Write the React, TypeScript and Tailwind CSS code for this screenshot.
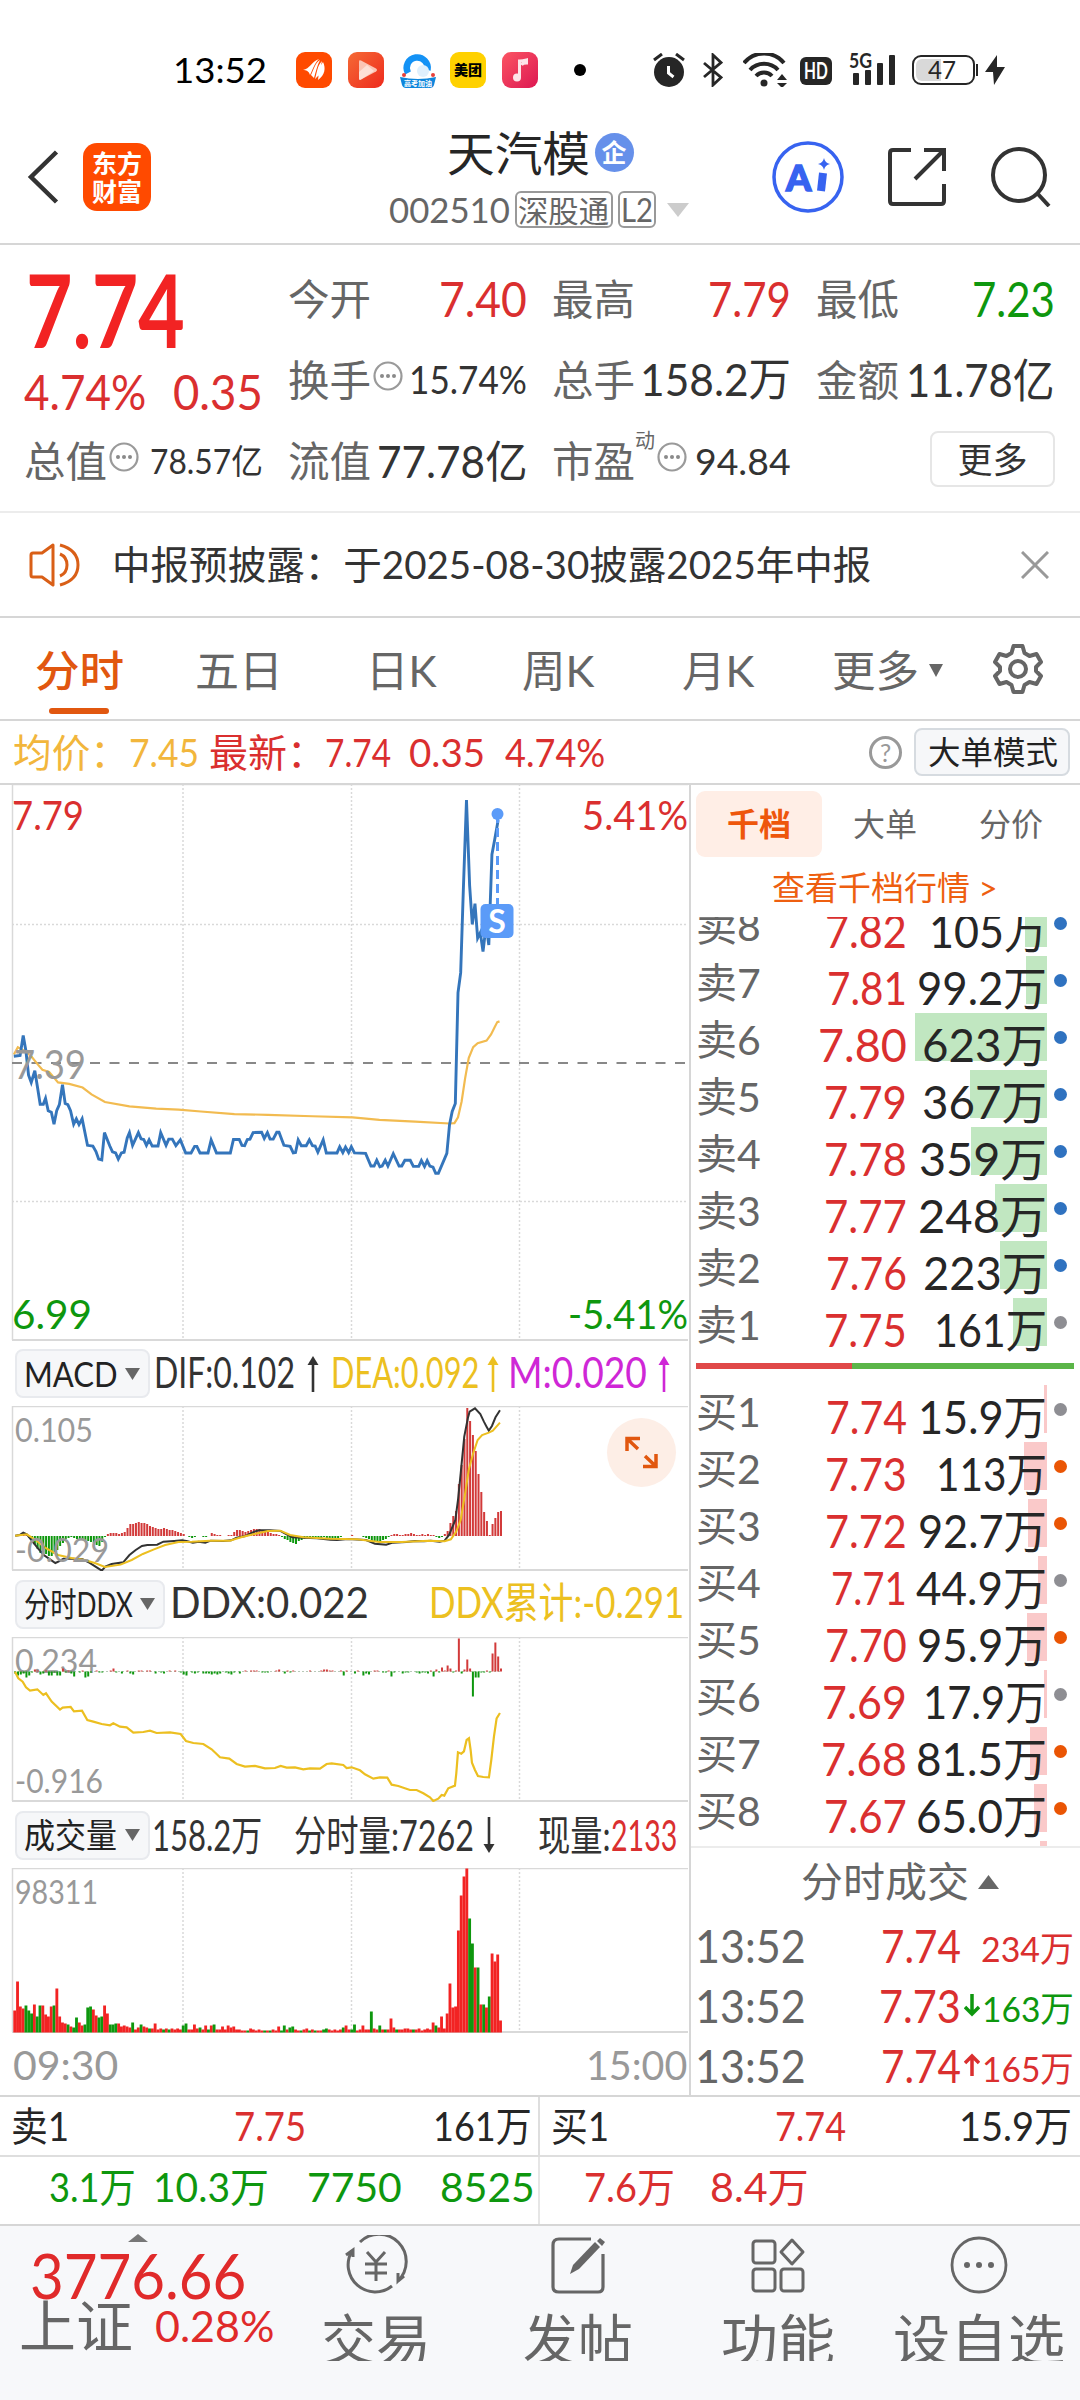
import { useLayoutEffect, useRef, useState } from 'react';
import type { ReactNode } from 'react';
import clsx from 'clsx';

type FitProps = {
    w: number;
    className?: string;
    children: ReactNode;
};

// Text squeezed or stretched horizontally so it fills exactly w pixels
function Fit({ w, className, children }: FitProps) {
    const ref = useRef<HTMLSpanElement>(null);
    const [scale, setScale] = useState(1);

    useLayoutEffect(() => {
        if (ref.current) setScale(w / ref.current.offsetWidth);
    }, [w, children]);

    return (
        <span className={ clsx('inline-block shrink-0 whitespace-nowrap leading-none', className) } style={ { width: w } }>
            <span ref={ ref } className="inline-block origin-left" style={ { transform: `scaleX(${scale})` } }>
                { children }
            </span>
        </span>
    );
}

const Dots = () => (
    <svg viewBox="0 0 30 30" className="size-[30px] shrink-0" fill="none">
        <circle cx="15" cy="15" r="13.5" stroke="#9a9a9a" strokeWidth="2.2" />
        <circle cx="9" cy="15" r="2" fill="#8a8a8a" />
        <circle cx="15" cy="15" r="2" fill="#8a8a8a" />
        <circle cx="21" cy="15" r="2" fill="#8a8a8a" />
    </svg>
);

/* ---------- Status bar ---------- */

function StatusBar() {
    return (
        <div className="flex h-[110px] items-center pt-[29px] pl-[173px] text-black">
            <Fit w={ 94 } className="text-[35px]">13:52</Fit>
            <svg viewBox="0 0 36 36" className="ml-[29px] size-9">
                <rect width="36" height="36" rx="9" fill="#ff4a00" />
                <path d="M7 18c7-1 8-8 16-11-5 5-5 8-9 16-1-4-4-5-7-5zM15 23c3-6 4-12 9-15-3 6-4 11-6 18zM19 27c2-6 2-13 7-18-1 4-2 8-1 12zM22 28c1-6 1-13 5-18 3 6 2 13-5 18z" fill="#fff" />
            </svg>
            <svg viewBox="0 0 36 36" className="ml-4 size-9">
                <defs>
                    <linearGradient id="play" x1="0" y1="0" x2="1" y2="1">
                        <stop offset="0" stopColor="#f56a35" />
                        <stop offset="1" stopColor="#ee2a1d" />
                    </linearGradient>
                </defs>
                <rect width="36" height="36" rx="9" fill="url(#play)" />
                <path d="M11 9.500q0-2 2-1l15 8q2 1.500 0 3l-15 8q-2 1-2-1z" fill="#fbc4b4" />
                <path d="M11 20l8-7 7 6-13 8.500q-2 1-2-1z" fill="#fde0d6" />
            </svg>
            <svg viewBox="0 0 38 36" className="ml-[15px] h-9 w-[38px]">
                <path d="M9 21A10.500 10.500 0 1 1 28.500 18" fill="none" stroke="#1492f5" strokeWidth="6.500" />
                <circle cx="24" cy="19" r="6" fill="#dff0fd" />
                <path d="M1 25q18 4 36 0l-2 8q-1 3-4 3H7q-3 0-4-3z" fill="#0e86dc" />
                <circle cx="5" cy="23" r="2" fill="#e8403a" />
                <circle cx="34" cy="23" r="2" fill="#e8403a" />
                <text x="19" y="33.500" textAnchor="middle" fontSize="7" fontWeight="700" fill="#fff">高考加油</text>
            </svg>
            <div className="ml-[13px] flex size-9 items-center justify-center rounded-[9px] bg-[#ffd100] text-[14px] font-black">美团</div>
            <svg viewBox="0 0 36 36" className="ml-4 size-9">
                <defs>
                    <linearGradient id="music" x1="0" y1="0" x2="1" y2="1">
                        <stop offset="0" stopColor="#fb5563" />
                        <stop offset="1" stopColor="#dd1752" />
                    </linearGradient>
                </defs>
                <rect width="36" height="36" rx="9" fill="url(#music)" />
                <circle cx="15" cy="25.500" r="4" fill="#fde4e8" />
                <path d="M17.500 25.500V9q3 0 7-1v3q-4 0-5 2" fill="none" stroke="#fde4e8" strokeWidth="3" />
            </svg>
            <div className="ml-[36px] size-3 rounded-full bg-black" />
            <div className="ml-[67px] flex items-center text-[#262626]">
                <svg viewBox="0 0 32 34" className="h-[34px] w-8" fill="none">
                    <circle cx="16" cy="19" r="15" fill="#262626" />
                    <path d="M1 7l8-6M31 7l-8-6" stroke="#262626" strokeWidth="3" />
                    <path d="M15.500 13v7l5 4" stroke="#fff" strokeWidth="3" />
                </svg>
                <svg viewBox="0 0 20 34" className="ml-[18px] h-[34px] w-5" fill="none" stroke="#262626" strokeWidth="2.8">
                    <path d="M1 10l17 14.500-8 7.500V2l8 7.500L1 24" />
                </svg>
                <svg viewBox="0 0 44 34" className="ml-[20px] h-[34px] w-11" fill="none" stroke="#262626" strokeWidth="4">
                    <path d="M1 10a26 26 0 0 1 40 0M7 17a19 19 0 0 1 28 0M13 23a11 11 0 0 1 16 0" />
                    <circle cx="21" cy="30" r="3.500" fill="#262626" stroke="none" />
                    <path d="M34 27l5-6 5 6zM34 30l5 5 5-5z" fill="#262626" stroke="none" />
                </svg>
                <div className="mt-[2px] ml-[13px] flex h-7 w-8 items-center justify-center rounded-md bg-[#262626] text-white">
                    <Fit w={ 24 } className="text-[22px] font-bold">HD</Fit>
                </div>
                <svg viewBox="0 0 47 34" className="ml-[17px] h-[34px] w-[47px]" fill="#262626">
                    <text x="0" y="15" fontSize="20" fontWeight="700" textLength="23" lengthAdjust="spacingAndGlyphs">5G</text>
                    <rect x="4" y="20" width="6" height="12" rx="1" />
                    <rect x="16" y="17" width="6" height="15" rx="1" />
                    <rect x="28" y="10" width="6" height="22" rx="1" />
                    <rect x="40" y="2" width="6" height="30" rx="1" />
                </svg>
                <div className="ml-[16px] flex h-[30px] w-[63px] items-center rounded-[9px] border-2 border-[#262626] p-[2px]">
                    <div className="flex h-full w-[25px] items-center rounded-l-[6px] bg-[#d9d9d9] pl-3">
                        <Fit w={ 28 } className="text-[25px]">47</Fit>
                    </div>
                </div>
                <div className="ml-[1px] h-3 w-[2px] bg-[#262626]" />
                <svg viewBox="0 0 20 32" className="ml-[7px] h-8 w-5" fill="#262626">
                    <path d="M12 1L0 18h8L9 31 20 13h-8z" />
                </svg>
            </div>
        </div>
    );
}

/* ---------- Title bar ---------- */

function Header() {
    return (
        <header className="flex h-[135px] items-center border-b-2 border-[#d6d6d6] pl-[27px]">
            <svg viewBox="0 0 32 56" className="h-14 w-8" fill="none" stroke="#333" strokeWidth="4.500">
                <path d="M29.500 3L4 28l25.500 25" />
            </svg>
            <div className="ml-6 flex h-[68px] w-[68px] flex-col items-center justify-center rounded-[14px] bg-[#ff4a00] text-[25px] leading-[28px] font-bold text-white">
                <span>东方</span>
                <span>财富</span>
            </div>
            <div className="ml-[236px] flex w-[303px] flex-col items-center pt-[5px]">
                <div className="flex items-center gap-[5px] pl-[3px] text-[#262626]">
                    <Fit w={ 143 } className="text-[47px]">天汽模</Fit>
                    <span className="-mt-[2px] flex size-[39px] items-center justify-center rounded-full bg-[#6690ea] text-[25px] font-bold text-white">企</span>
                </div>
                <div className="mt-[14px] flex h-[38px] items-center text-[#666]">
                    <Fit w={ 121 } className="text-[35px]">002510</Fit>
                    <span className="ml-[5px] flex h-[37px] w-[98px] items-center justify-center rounded-[6px] border-2 border-[#999]">
                        <Fit w={ 91 } className="text-[30px]">深股通</Fit>
                    </span>
                    <span className="ml-[5px] flex h-[37px] w-[38px] items-center justify-center rounded-[6px] border-2 border-[#999]">
                        <Fit w={ 32 } className="text-[32px]">L2</Fit>
                    </span>
                    <svg viewBox="0 0 22 14" className="ml-[11px] h-[14px] w-[22px]" fill="#ccc">
                        <path d="M0 0h22L11 14z" />
                    </svg>
                </div>
            </div>
            <svg viewBox="0 0 72 72" className="ml-[82px] size-[72px]" fill="none">
                <circle cx="36" cy="36" r="34" stroke="#3763f0" strokeWidth="3.500" />
                <text x="14" y="50" fontSize="36" fontWeight="900" fill="#3763f0" stroke="#3763f0" strokeWidth="1.500">A</text>
                <path d="M51 32l-2 18" stroke="#3763f0" strokeWidth="8" />
                <path d="M52 17q1 5 6 6-5 1-6 6-1-5-6-6 5-1 6-6z" fill="#3763f0" />
            </svg>
            <svg viewBox="0 0 58 58" className="ml-11 size-[58px]" fill="none" stroke="#333" strokeWidth="4">
                <path d="M23 2H5Q2 2 2 5v48q0 3 3 3h48q3 0 3-3V36M36 2h20v21M56 2L27 31" />
            </svg>
            <svg viewBox="0 0 60 60" className="ml-[45px] size-[60px]" fill="none" stroke="#333" strokeWidth="4">
                <circle cx="28" cy="28" r="26" />
                <path d="M46 46l12 13" />
            </svg>
        </header>
    );
}

/* ---------- Quote summary ---------- */

function Summary() {
    return (
        <section className="grid h-[268px] grid-cols-[239px_239px_239px_239px] grid-rows-[81px_81px_81px] gap-x-[25px] border-b-2 border-[#ececec] pt-[13px] pl-6 text-[42px] text-[#666]">
            <div className="row-span-2 flex flex-col pt-[1px] text-[#da2f2f]">
                <Fit w={ 159 } className="ml-[2px] text-[101px] font-bold text-[#f22323]">7.74</Fit>
                <div className="mt-[8px] flex justify-between">
                    <Fit w={ 122 } className="text-[48px]">4.74%</Fit>
                    <Fit w={ 90 } className="text-[48px]">0.35</Fit>
                </div>
            </div>
            <div className="flex items-center justify-between">
                <Fit w={ 83 }>今开</Fit>
                <Fit w={ 88 } className="text-[48px] text-[#da2f2f]">7.40</Fit>
            </div>
            <div className="flex items-center justify-between">
                <Fit w={ 83 }>最高</Fit>
                <Fit w={ 83 } className="text-[48px] text-[#da2f2f]">7.79</Fit>
            </div>
            <div className="flex items-center justify-between">
                <Fit w={ 83 }>最低</Fit>
                <Fit w={ 83 } className="text-[48px] text-[#0e970e]">7.23</Fit>
            </div>
            <div className="flex items-center">
                <Fit w={ 83 }>换手</Fit>
                <span className="ml-[2px] -mt-2"><Dots /></span>
                <Fit w={ 118 } className="ml-auto text-[39px] text-[#333]">15.74%</Fit>
            </div>
            <div className="flex items-center justify-between">
                <Fit w={ 83 }>总手</Fit>
                <Fit w={ 151 } className="text-[45px] text-[#333]">158.2万</Fit>
            </div>
            <div className="flex items-center justify-between">
                <Fit w={ 83 }>金额</Fit>
                <Fit w={ 149 } className="text-[46px] text-[#333]">11.78亿</Fit>
            </div>
            <div className="flex items-center">
                <Fit w={ 83 }>总值</Fit>
                <span className="ml-[2px] -mt-2"><Dots /></span>
                <Fit w={ 113 } className="ml-auto text-[34px] text-[#333]">78.57亿</Fit>
            </div>
            <div className="flex items-center justify-between">
                <Fit w={ 83 }>流值</Fit>
                <Fit w={ 150 } className="text-[44px] text-[#333]">77.78亿</Fit>
            </div>
            <div className="flex items-center">
                <Fit w={ 83 }>市盈</Fit>
                <Fit w={ 20 } className="-mt-[42px] text-[20px]">动</Fit>
                <span className="ml-[2px] -mt-2"><Dots /></span>
                <Fit w={ 96 } className="ml-auto text-[37px] text-[#333]">94.84</Fit>
            </div>
            <div className="flex items-center justify-end">
                <button className="mt-[-3px] flex h-14 w-[125px] items-center justify-center rounded-[8px] border-2 border-[#e6e6e6] text-[#333]">
                    <Fit w={ 70 } className="text-[35px]">更多</Fit>
                </button>
            </div>
        </section>
    );
}

function Notice() {
    return (
        <section className="flex h-[105px] items-center border-b-2 border-[#d6d6d6] pl-[29px] text-[#333]">
            <svg viewBox="0 0 52 46" className="h-[46px] w-[52px]" fill="none" stroke="#d95f17" strokeWidth="3">
                <path d="M24 3L13 11H4Q2 11 2 13v20q0 2 2 2h9l11 8z" strokeLinejoin="round" />
                <path d="M31 12q7 3 7 11t-7 11M31 3q18 5 18 20T31 43" />
            </svg>
            <Fit w={ 759 } className="ml-[31px] text-[39px]">中报预披露：于2025-08-30披露2025年中报</Fit>
            <svg viewBox="0 0 28 28" className="ml-[150px] size-7" stroke="#999" strokeWidth="3">
                <path d="M1 1l26 26M27 1L1 27" />
            </svg>
        </section>
    );
}

/* ---------- Period tabs ---------- */

function Tabs() {
    return (
        <nav className="flex h-[103px] border-b-2 border-[#d6d6d6] pt-[31px] pl-[34px] text-[43px] text-[#666]">
            <div className="flex w-[90px] flex-col items-center text-[#e1570f]">
                <Fit w={ 89 } className="font-medium">分时</Fit>
                <span className="mt-[16px] h-[6px] w-[60px] rounded-full bg-[#e1570f]" />
            </div>
            <Fit w={ 88 } className="ml-[71px]">五日</Fit>
            <Fit w={ 71 } className="ml-[83px]">日K</Fit>
            <Fit w={ 73 } className="ml-[85px]">周K</Fit>
            <Fit w={ 73 } className="ml-[87px]">月K</Fit>
            <Fit w={ 87 } className="ml-[77px]">更多</Fit>
            <svg viewBox="0 0 14 13" className="mt-[15px] ml-[10px] h-[13px] w-[14px]" fill="#666">
                <path d="M0 0h14L7 13z" />
            </svg>
            <svg viewBox="0 0 52 52" className="mt-[-6px] ml-[49px] size-[52px]" fill="none" stroke="#666" strokeWidth="4" strokeLinejoin="round">
                <path d="M21.500 3h9l2 7 5 3 7-2 4.500 8-5 5v4l5 5-4.500 8-7-2-5 3-2 7h-9l-2-7-5-3-7 2L3 33l5-5v-4l-5-5 4.500-8 7 2 5-3z" />
                <circle cx="26" cy="26" r="8" />
            </svg>
        </nav>
    );
}

function PriceRow() {
    return (
        <div className="flex h-[64px] items-center border-b-2 border-[#d6d6d6] pl-[13px] text-[39px] text-[#da2f2f]">
            <Fit w={ 116 } className="text-[#f2b63c]">均价：</Fit>
            <Fit w={ 70 } className="text-[#f2b63c]">7.45</Fit>
            <Fit w={ 117 } className="ml-[10px]">最新：</Fit>
            <Fit w={ 66 } className="-ml-[1px]">7.74</Fit>
            <Fit w={ 76 } className="ml-[18px]">0.35</Fit>
            <Fit w={ 100 } className="ml-[20px]">4.74%</Fit>
            <span className="ml-[264px] flex size-[33px] items-center justify-center rounded-full border-[3px] border-[#999] text-[25px] leading-none text-[#999]">?</span>
            <button className="ml-3 flex h-[48px] w-[156px] items-center justify-center rounded-[8px] border-2 border-[#d6dbe0] bg-[#f6f7f9] text-[#222]">
                <Fit w={ 130 } className="text-[32px]">大单模式</Fit>
            </button>
        </div>
    );
}

/* ---------- Charts ---------- */

const pricePoints =
    '31,760 45,758 52,703 58,745 64,812 70,832 78,800 84,845 90,892 97,892 102,876 108,910 115,914 121,947 127,910 133,893 140,838 146,890 152,893 158,910 165,947 171,932 177,948 184,932 196,1005 208,1007 215,1022 221,1043 228,1045 234,970 246,1007 252,1023 259,1026 265,1043 272,1026 278,1024 285,985 290,970 297,1005 310,970 316,987 322,989 328,1005 334,990 341,1007 354,1007 360,970 372,1005 378,988 386,988 394,1006 404,990 416,1026 428,1026 436,1008 441,1008 448,1026 466,1026 473,990 485,1026 516,1026 523,989 536,989 542,1005 548,1006 554,989 560,988 567,970 586,969 592,986 599,970 605,988 612,988 620,969 625,969 636,1005 650,1008 657,1026 662,1025 668,990 675,1006 686,1006 693,990 700,1006 706,1007 712,1024 724,990 731,1026 755,1026 761,1009 768,1025 774,1010 781,1025 787,1009 794,1026 819,1027 831,1062 838,1062 844,1046 851,1064 856,1062 863,1046 869,1062 881,1028 894,1062 900,1062 907,1046 919,1046 926,1063 938,1063 944,1047 951,1063 957,1047 963,1062 970,1065 976,1082 982,1082 1001,1027 1007,948 1013,912 1020,890 1026,585 1032,530 1038,300 1045,55 1052,290 1058,397 1064,340 1070,435 1076,420 1082,472 1089,400 1095,454 1102,205 1108,165 1116,110';
const averagePoints =
    '31,755 40,735 55,745 70,760 85,783 95,797 110,803 130,832 155,836 185,846 205,865 235,886 290,898 350,904 400,907 450,912 525,919 600,921 700,925 790,928 850,935 930,940 1007,945 1018,944 1026,928 1034,885 1042,820 1050,765 1060,735 1070,724 1090,717 1100,700 1108,680 1114,666 1119,664';
const difPoints =
    '34,587 44,585 52,578 60,583 70,600 85,625 98,645 112,658 124,669 132,664 142,656 160,656 185,658 200,668 214,680 228,692 236,680 250,672 276,667 290,645 304,630 318,618 330,615 352,614 366,605 390,603 408,601 420,604 432,608 445,605 460,608 472,602 500,603 518,601 530,593 550,588 570,575 580,571 605,571 628,573 640,582 655,592 680,593 710,595 740,599 755,600 780,597 820,600 840,611 865,614 880,608 910,606 930,603 950,604 965,602 985,605 996,602 1006,585 1020,540 1026,480 1032,400 1040,290 1048,235 1052,215 1064,205 1076,222 1084,245 1090,260 1095,272 1102,258 1110,232 1120,211';
const deaPoints =
    '34,587 60,583 80,600 100,622 130,645 160,654 190,660 214,670 235,681 270,674 295,660 320,642 345,628 370,615 400,606 430,605 470,602 515,602 540,592 570,582 600,573 628,572 650,585 680,592 740,596 800,598 850,606 900,606 960,602 996,604 1010,598 1022,575 1032,540 1042,460 1050,390 1060,340 1070,300 1080,285 1095,278 1104,272 1120,248';
const ddxPoints =
    '15,335 25,355 38,365 48,382 60,392 82,388 100,405 108,400 125,425 150,449 158,443 182,441 192,454 216,452 232,480 250,485 275,492 300,496 310,490 330,500 350,502 370,518 400,516 420,512 440,519 480,517 512,522 528,543 550,549 580,552 605,568 630,592 658,596 680,612 705,620 735,618 765,625 795,624 812,618 830,623 855,622 880,628 900,625 930,626 950,612 965,610 1000,615 1010,624 1025,622 1050,631 1065,643 1090,656 1110,652 1132,653 1145,674 1165,678 1200,690 1220,690 1240,700 1260,712 1270,723 1285,716 1295,705 1303,707 1315,685 1335,677 1339,640 1344,577 1354,581 1362,574 1370,540 1377,535 1382,570 1386,608 1395,630 1404,648 1420,651 1437,652 1444,600 1452,530 1460,475 1470,459';

// One bar per minute, positive is red, negative is green
const macdBars = [
    0, 0, 2, 3, 1, -2, -5, -9, -13, -17, -18, -18, -20, -20, -18, -14, -10, -7, -3, -2, -1, -2, -3, -3, -4, -4, -5, -6, -7, -9, -10,
    -6, -1, 2, 3, 3, 3, 2, 3, 4, 8, 12, 12, 13, 14, 13, 13, 12, 10, 9, 8, 7, 7, 8, 7, 6, 6, 5, 4, 3, 2, 0, -1, -2, -1, 0, 0, -1, -1, 0, 3,
    2, 1, 1, 0, 0, 1, 1, 4, 6, 6, 5, 4, 5, 6, 7, 7, 7, 6, 6, 5, 3, 2, 2, 1, -1, -3, -4, -6, -7, -8, -5, -4, -3, -2, -1, -1, -1, -2, -2, -1,
    -2, -3, -4, -4, -3, -1, 0, 0, 0, 1, 0, 0, 0, -1, -2, -3, -5, -6, -6, -5, -4, -3, -1, 1, 2, 2, 1, 1, 2, 2, 3, 2, 1, 1, 2, 1, 2, 1, 1, -1,
    -2, -1, 2, 5, 13, 20, 25, 52, 71, 97, 128, 115, 101, 85, 62, 44, 24, 15, 1, 12, 18, 24, 25,
];
const volumeBars = [
    22, 51, 26, 24, -27, -22, -19, 28, -16, -27, 27, 18, 16, 26, -27, 44, 16, 10, 9, -8, 6, -5, -15, 10, 7, -8, -25, -26, 23, 17, -15,
    -16, 27, 19, -8, -8, -9, 9, 6, 7, 6, 5, -10, 3, 5, -8, 6, 5, -4, 4, 9, 3, 4, -3, 4, -3, 4, 3, 4, 3, -7, -9, 3, 3, 8, 4, -5, 3, 7, -3, 7,
    -8, 3, 3, 6, 3, 7, 5, 6, 3, 3, 2, 2, -2, 4, 3, 2, 3, 2, -2, 2, -2, 3, 2, 6, -2, -7, 3, -5, -6, 3, 2, -2, 3, 4, -2, 3, -2, 2, 2, -3, -4,
    3, 2, 3, 2, 3, -5, 7, 3, -3, -8, 2, 3, 7, 3, 3, -21, 4, 3, -7, 3, -3, 3, 14, 5, -3, 3, 3, 4, 4, 3, -3, 3, 4, 2, 3, 4, 3, 10, -7, 5, 16,
    4, 19, 49, 25, 26, 102, 137, 156, 164, -114, -89, 65, -65, 28, -28, 25, -36, 79, 71, 78, 12,
];
const ddxBars = [
    -2, -4, -3, -2, -6, -4, -1, 2, 1, -3, -2, 1, -4, -4, -1, -4, -4, 3, -1, 1, -2, -5, 0, -1, 1, -6, -5, -1, 0, 1, -1, -1, 0, 0, 1, 3, -1,
    0, -2, 0, 1, -2, -3, 0, 1, 1, 0, 1, 1, 0, -2, 0, -1, -2, 0, 1, 0, 1, 0, -1, -3, -4, 0, -1, -2, -1, 0, -2, -2, -2, -3, -2, -3, -2, 0,
    -1, -2, -3, -1, 0, -2, 0, 1, 0, 1, 1, 1, 0, -1, -1, -1, 0, 0, 1, 2, 0, -2, 1, -1, 1, 0, 0, 0, 0, 0, 1, 0, 0, 0, 1, 2, 2, 1, 1, 0, 0, 1,
    -4, 1, 0, 0, -2, 1, 0, -4, -2, -3, 0, 1, 1, 0, -1, -1, 1, -5, -1, 0, 0, -2, -1, -1, 0, 0, -1, -2, -1, -1, -2, 1, -5, 2, -1, 4, 1, 6, 3,
    -1, 1, 33, -2, 2, 12, 3, -25, -6, -6, -1, -1, 1, -1, 18, 29, 15, 3,
];

type BarsProps = { data: number[]; base: number; start: number; width: number; up: string; down: string; stacked?: boolean };

// With stacked set, the green bars also grow upwards from the base line
function Bars({ data, base, start, width, up, down, stacked }: BarsProps) {
    return (
        <g>
            { data.map((v, i) => (
                <rect
                    key={ i }
                    x={ start + i * 2.808 }
                    y={ v > 0 || stacked ? base - Math.abs(v) : base }
                    width={ width }
                    height={ Math.abs(v) }
                    fill={ v > 0 ? up : down }
                />
            )) }
        </g>
    );
}

type FrameProps = { top: number; bottom: number };

// Border and dotted time lines shared by all four charts
function Frame({ top, bottom }: FrameProps) {
    return (
        <g fill="none" stroke="#d9d9d9">
            <path d={ `M12.500 ${bottom - 1}V${top}` } strokeWidth="1.500" />
            <path d={ `M12 ${top + 0.5}H688` } strokeWidth="1.500" />
            <path d={ `M12 ${bottom - 1}H688` } strokeWidth="2" />
            <path d={ `M183 ${top}V${bottom}M351.500 ${top}V${bottom}M519.500 ${top}V${bottom}` } strokeWidth="1.500" strokeDasharray="2 2" />
        </g>
    );
}

function Label({ x, y, w, size, fill = '#999', children }: { x: number; y: number; w: number; size: number; fill?: string; children: string }) {
    return (
        <text x={ x } y={ y } fontSize={ size } fill={ fill } textLength={ w } lengthAdjust="spacingAndGlyphs">{ children }</text>
    );
}

function PriceChart() {
    return (
        <svg viewBox="0 785 690 556" className="h-[556px] w-[690px]">
            <Frame top={ 784 } bottom={ 1341 } />
            <path d="M12 924.500H688M12 1201.500H688" stroke="#d9d9d9" strokeWidth="1.500" strokeDasharray="2 2" />
            <path d="M12 1063H688" stroke="#888" strokeWidth="2" strokeDasharray="10 9.500" />
            <g transform="translate(0 780) scale(0.4464 0.3635)" fill="none">
                <polyline points={ averagePoints } stroke="#f2bb50" strokeWidth="2.200" vectorEffect="non-scaling-stroke" />
                <polyline points={ pricePoints } stroke="#3475bb" strokeWidth="2.900" vectorEffect="non-scaling-stroke" />
            </g>
            <Label x={ 12 } y={ 830 } w={ 72 } size={ 41 } fill="#da2f2f">7.79</Label>
            <Label x={ 582 } y={ 830 } w={ 106 } size={ 41 } fill="#da2f2f">5.41%</Label>
            <Label x={ 14 } y={ 1079 } w={ 72 } size={ 41 }>7.39</Label>
            <Label x={ 12 } y={ 1329 } w={ 80 } size={ 41 } fill="#0e970e">6.99</Label>
            <Label x={ 568 } y={ 1329 } w={ 120 } size={ 41 } fill="#0e970e">-5.41%</Label>
            <path d="M497.500 814V904" stroke="#5b9bf8" strokeWidth="3" strokeDasharray="9 5" />
            <circle cx="497.500" cy="814" r="6" fill="#5b9bf8" />
            <rect x="480.500" y="904" width="33" height="34" rx="5" fill="#5b9bf8" />
            <text x="497" y="932.500" textAnchor="middle" fontSize="32" fontWeight="700" fill="#fff">S</text>
        </svg>
    );
}

function MacdChart() {
    return (
        <svg viewBox="0 1406 690 165" className="h-[165px] w-[690px]">
            <Frame top={ 1406 } bottom={ 1571 } />
            <Bars data={ macdBars } base={ 1536 } start={ 14.2 } width={ 2 } up="#d23a3a" down="#0e970e" />
            <g transform="translate(0 1340) scale(0.4464 0.3333)" fill="none" strokeWidth="2">
                <polyline points={ difPoints } stroke="#333" vectorEffect="non-scaling-stroke" />
                <polyline points={ deaPoints } stroke="#ecbf20" vectorEffect="non-scaling-stroke" />
            </g>
            <Label x={ 15 } y={ 1442 } w={ 78 } size={ 33 }>0.105</Label>
            <Label x={ 15 } y={ 1562 } w={ 94 } size={ 33 }>-0.029</Label>
            <circle cx="641.500" cy="1452.500" r="34.500" fill="#fdeee6" />
            <path d="M627 1451V1438.500H640M628 1439.500L638 1449M656 1454V1466.500H643M655 1465.500L645 1456" fill="none" stroke="#e1570f" strokeWidth="3.500" />
        </svg>
    );
}

function DdxChart() {
    return (
        <svg viewBox="0 1637 690 165" className="h-[165px] w-[690px]">
            <Frame top={ 1637 } bottom={ 1802 } />
            <path d="M14 1671.500H500" stroke="#b9c9b9" strokeWidth="1" strokeDasharray="2 2" />
            <Label x={ 15 } y={ 1673 } w={ 82 } size={ 33 }>0.234</Label>
            <Bars data={ ddxBars } base={ 1671.5 } start={ 14.2 } width={ 2 } up="#d23a3a" down="#0e970e" />
            <g transform="translate(10 1560) scale(0.3333)" fill="none">
                <polyline points={ ddxPoints } stroke="#ecbf20" strokeWidth="2.200" vectorEffect="non-scaling-stroke" />
            </g>
            <Label x={ 15 } y={ 1793 } w={ 88 } size={ 33 }>-0.916</Label>
        </svg>
    );
}

function VolumeChart() {
    return (
        <svg viewBox="0 1868 690 165" className="h-[165px] w-[690px]">
            <Frame top={ 1868 } bottom={ 2033 } />
            <Bars data={ volumeBars } base={ 2032.5 } start={ 13.3 } width={ 2.85 } up="#f22323" down="#0e970e" stacked />
            <Label x={ 15 } y={ 1904 } w={ 83 } size={ 33 }>98311</Label>
        </svg>
    );
}

const Arrow = ({ color, down, className }: { color: string; down?: boolean; className?: string }) => (
    <svg viewBox="0 0 12 36" className={ clsx('h-9 w-3 shrink-0', down && 'rotate-180', className) }>
        <path d="M6 0l5.500 9H.5z" fill={ color } />
        <path d="M6 6v30" stroke={ color } strokeWidth="2.600" />
    </svg>
);

function Picker({ w, text, children }: { w: string; text: number; children: string }) {
    return (
        <button className={ clsx('flex h-[49px] shrink-0 items-center justify-between rounded-[8px] border-2 border-[#e8eaee] bg-[#f6f7f9] pr-[8px] pl-[7px] text-[#222]', w) }>
            <Fit w={ text } className="text-[34px]">{ children }</Fit>
            <svg viewBox="0 0 15 12" className="h-3 w-[15px]" fill="#666">
                <path d="M0 0h15L7.500 12z" />
            </svg>
        </button>
    );
}

function LeftPanel() {
    return (
        <div className="flex w-[691px] flex-col border-r-2 border-[#d6d6d6] text-[42px] text-[#333]">
            <PriceChart />
            <div className="flex h-[65px] items-center pl-[15px]">
                <Picker w="w-[135px]" text={ 94 }>MACD</Picker>
                <Fit w={ 141 } className="ml-[4px] -mt-1">DIF:0.102</Fit>
                <Arrow color="#333" className="ml-[12px]" />
                <Fit w={ 148 } className="ml-[12px] -mt-1 text-[#ecc020]">DEA:0.092</Fit>
                <Arrow color="#ecc020" className="ml-[8px]" />
                <Fit w={ 139 } className="ml-[9px] -mt-1 text-[#cf27d6]">M:0.020</Fit>
                <Arrow color="#cf27d6" className="ml-[11px]" />
            </div>
            <MacdChart />
            <div className="flex h-[66px] items-center pl-[15px]">
                <Picker w="w-[150px]" text={ 109 }>分时DDX</Picker>
                <Fit w={ 199 } className="ml-[5px] -mt-1">DDX:0.022</Fit>
                <Fit w={ 255 } className="ml-[60px] -mt-1 text-[#ecc020]">DDX累计:-0.291</Fit>
            </div>
            <DdxChart />
            <div className="flex h-[66px] items-center pl-[15px]">
                <Picker w="w-[135px]" text={ 93 }>成交量</Picker>
                <Fit w={ 110 } className="ml-[2px]">158.2万</Fit>
                <Fit w={ 180 } className="ml-[32px]">分时量:7262</Fit>
                <Arrow color="#333" down className="ml-[9px]" />
                <Fit w={ 73 } className="ml-[43px]">现量:</Fit>
                <Fit w={ 66 } className="text-[#da2f2f]">2133</Fit>
            </div>
            <VolumeChart />
            <div className="flex grow items-center justify-between pr-[2px] pl-[13px] text-[41px] text-[#999]">
                <Fit w={ 105 }>09:30</Fit>
                <Fit w={ 101 }>15:00</Fit>
            </div>
        </div>
    );
}

/* ---------- Order book ---------- */

type Level = { name: string; price: string; pw: number; volume: string; vw: number; bar: number; dot: string };

const sells: Level[] = [
    { name: '卖8', price: '7.82', pw: 82, volume: '105万', vw: 118, bar: 22, dot: '#2f72c0' },
    { name: '卖7', price: '7.81', pw: 80, volume: '99.2万', vw: 130, bar: 21, dot: '#2f72c0' },
    { name: '卖6', price: '7.80', pw: 89, volume: '623万', vw: 125, bar: 132, dot: '#2f72c0' },
    { name: '卖5', price: '7.79', pw: 83, volume: '367万', vw: 125, bar: 77, dot: '#2f72c0' },
    { name: '卖4', price: '7.78', pw: 83, volume: '359万', vw: 128, bar: 76, dot: '#2f72c0' },
    { name: '卖3', price: '7.77', pw: 83, volume: '248万', vw: 129, bar: 52, dot: '#2f72c0' },
    { name: '卖2', price: '7.76', pw: 81, volume: '223万', vw: 124, bar: 47, dot: '#2f72c0' },
    { name: '卖1', price: '7.75', pw: 83, volume: '161万', vw: 113, bar: 34, dot: '#8e8e93' },
];

const buys: Level[] = [
    { name: '买1', price: '7.74', pw: 81, volume: '15.9万', vw: 129, bar: 3, dot: '#8e8e93' },
    { name: '买2', price: '7.73', pw: 82, volume: '113万', vw: 111, bar: 23, dot: '#ea5504' },
    { name: '买3', price: '7.72', pw: 82, volume: '92.7万', vw: 129, bar: 19, dot: '#ea5504' },
    { name: '买4', price: '7.71', pw: 76, volume: '44.9万', vw: 131, bar: 9, dot: '#8e8e93' },
    { name: '买5', price: '7.70', pw: 82, volume: '95.9万', vw: 130, bar: 20, dot: '#ea5504' },
    { name: '买6', price: '7.69', pw: 85, volume: '17.9万', vw: 124, bar: 3, dot: '#8e8e93' },
    { name: '买7', price: '7.68', pw: 86, volume: '81.5万', vw: 131, bar: 17, dot: '#ea5504' },
    { name: '买8', price: '7.67', pw: 83, volume: '65.0万', vw: 131, bar: 13, dot: '#ea5504' },
];

function LevelRow({ level, sell }: { level: Level; sell?: boolean }) {
    return (
        <div className="relative mb-[9px] flex h-12 shrink-0 items-center pl-[5px]">
            <span
                className={ clsx('absolute top-0 right-[33px] h-12', sell ? 'bg-[#c1e7c1]' : 'bg-[#fac9c9]') }
                style={ { width: level.bar } }
            />
            <Fit w={ 65 } className="relative mt-[5px] text-[41px] text-[#666]">{ level.name }</Fit>
            <div className="relative mt-[15px] flex w-[146px] justify-end">
                <Fit w={ level.pw } className="text-[47px] text-[#da2f2f]">{ level.price }</Fit>
            </div>
            <div className="relative mt-[15px] flex w-[140px] justify-end">
                <Fit w={ level.vw } className="text-[46px] text-[#262626]">{ level.volume }</Fit>
            </div>
            <span className="ml-[7px] size-[13px] rounded-full" style={ { background: level.dot } } />
        </div>
    );
}

function RightPanel() {
    return (
        <div className="flex w-[389px] flex-col">
            <div className="flex h-[74px] items-center pt-[4px] pl-[5px] text-[32px] text-[#666]">
                <span className="flex h-[66px] w-[126px] items-center justify-center rounded-[9px] bg-[#ffeee6] font-bold text-[#ee560b]">千档</span>
                <span className="flex w-[126px] justify-center">大单</span>
                <span className="flex w-[126px] justify-center">分价</span>
            </div>
            <div className="flex h-[58px] items-center pb-[1px] pl-[81px] text-[#ee5f10]">
                <Fit w={ 226 } className="text-[33px]">查看千档行情 &gt;</Fit>
            </div>
            <div className="flex h-[440px] flex-col justify-end overflow-hidden">
                { sells.map((l) => (
                    <LevelRow key={ l.name } level={ l } sell />
                )) }
            </div>
            <div className="mt-[8px] ml-[5px] flex h-[6px] w-[378px]">
                <span className="w-[156px] bg-[#e04848]" />
                <span className="grow bg-[#5bb548]" />
            </div>
            <div className="flex h-[478px] flex-col overflow-hidden pt-4">
                { buys.map((l) => (
                    <LevelRow key={ l.name } level={ l } />
                )) }
                <span className="mr-[33px] h-12 w-[7px] shrink-0 self-end bg-[#fac9c9]" />
            </div>
            <div className="flex h-[70px] items-center border-t-2 border-[#ececec] pl-[110px] text-[41px] text-[#666]">
                <Fit w={ 168 }>分时成交</Fit>
                <svg viewBox="0 0 21 14" className="ml-[9px] h-[14px] w-[21px]" fill="#666">
                    <path d="M0 14h21L10.500 0z" />
                </svg>
            </div>
            { [
                { price: '7.74', pw: 80, vol: '234万', vw: 93, color: '#da2f2f', arrow: '' },
                { price: '7.73', pw: 82, vol: '163万', vw: 92, color: '#0e970e', arrow: 'down' },
                { price: '7.74', pw: 80, vol: '165万', vw: 92, color: '#da2f2f', arrow: 'up' },
            ].map((t, i) => (
                <div key={ i } className="flex h-[60px] items-center pl-[4px] text-[47px] text-[#666]">
                    <Fit w={ 111 }>13:52</Fit>
                    <div className="flex w-[155px] justify-end text-[#da2f2f]">
                        <Fit w={ t.pw }>{ t.price }</Fit>
                    </div>
                    <span className="flex h-[25px] w-[20px] justify-center pl-[1px]">
                        { t.arrow && (
                            <svg viewBox="0 0 16 24" className={ clsx('h-6 w-4 shrink-0', t.arrow === 'down' && 'rotate-180') } fill="none" stroke={ t.color } strokeWidth="3.500">
                                <path d="M8 23V3M1 10l7-7 7 7" />
                            </svg>
                        ) }
                    </span>
                    <div className="mt-[7px] flex w-[93px] justify-end text-[35px]" style={ { color: t.color } }>
                        <Fit w={ t.vw }>{ t.vol }</Fit>
                    </div>
                </div>
            )) }
        </div>
    );
}

/* ---------- Best bid / ask ---------- */

function Queue() {
    return (
        <section className="grid grid-cols-[540px_540px] border-t-2 border-[#d6d6d6] text-[40px] text-[#262626]">
            <div className="flex h-[60px] items-center justify-between border-r-2 border-b-2 border-[#dedede] pr-[6px] pl-[11px]">
                <Fit w={ 58 }>卖1</Fit>
                <Fit w={ 72 } className="ml-[37px] text-[#da2f2f]">7.75</Fit>
                <Fit w={ 99 }>161万</Fit>
            </div>
            <div className="flex h-[60px] items-center justify-between border-b-2 border-[#dedede] pr-[8px] pl-[11px]">
                <Fit w={ 58 }>买1</Fit>
                <Fit w={ 71 } className="ml-[52px] text-[#da2f2f]">7.74</Fit>
                <Fit w={ 113 }>15.9万</Fit>
            </div>
            <div className="flex h-[67px] items-center border-r-2 border-[#e6e6e6] pb-[7px] pl-[49px] text-[#0e970e]">
                <Fit w={ 87 }>3.1万</Fit>
                <Fit w={ 116 } className="ml-[17px]">10.3万</Fit>
                <Fit w={ 95 } className="ml-[38px]">7750</Fit>
                <Fit w={ 95 } className="ml-[38px]">8525</Fit>
            </div>
            <div className="flex h-[67px] items-center pb-[7px] pl-[44px] text-[#da2f2f]">
                <Fit w={ 91 }>7.6万</Fit>
                <Fit w={ 99 } className="ml-[35px]">8.4万</Fit>
            </div>
        </section>
    );
}

/* ---------- Bottom bar ---------- */

function BottomBar() {
    const label = 'h-[49px] overflow-hidden text-[55px]';

    return (
        <footer className="flex h-[176px] border-t-2 border-[#d6d6d6] bg-[#f7f8fa] text-[#666]">
            <div className="flex w-[294px] shrink-0 flex-col pl-[19px] text-[#e02a2a]">
                <svg viewBox="0 0 20 8" className="mt-[8px] ml-[109px] h-2 w-5" fill="#777">
                    <path d="M0 8h20L10 0z" />
                </svg>
                <Fit w={ 216 } className="mt-[2px] ml-[11px] text-[62px]">3776.66</Fit>
                <div className="-mt-[8px] flex items-center">
                    <Fit w={ 114 } className="text-[56px] text-[#666]">上证</Fit>
                    <Fit w={ 119 } className="-mt-[2px] ml-[22px] text-[43px]">0.28%</Fit>
                </div>
            </div>
            <div className="flex w-[164px] shrink-0 flex-col items-center pt-[9px]">
                <svg viewBox="0 0 66 60" className="mb-[17px] h-[60px] w-[66px]" fill="none" stroke="#666" strokeWidth="3">
                    <path d="M17 7A27 27 0 0 1 55 46l0-8M55 46l6-5M49 51A27 27 0 0 1 9 16M3 20l7-5 0 7" />
                    <path d="M24 17l9 10 9-10M33 27v19M22 29h22M22 38h22" />
                </svg>
                <Fit w={ 110 } className={ label }>交易</Fit>
            </div>
            <div className="flex w-[240px] shrink-0 flex-col items-center pt-[9px]">
                <svg viewBox="0 0 56 60" className="mb-[17px] h-[60px] w-14" fill="none" stroke="#666" strokeWidth="3.200">
                    <path d="M41 4H9Q3 4 3 10v42q0 5 6 5h39q5 0 5-5V19" />
                    <path d="M20 39l3-9L45 7l5 5-21 22z" fill="#666" stroke="none" />
                    <path d="M47 6l3-3 5 4-3 4z" fill="#666" stroke="none" />
                </svg>
                <Fit w={ 110 } className={ label }>发帖</Fit>
            </div>
            <div className="flex w-[160px] shrink-0 flex-col items-center pt-[9px]">
                <svg viewBox="0 0 56 60" className="mb-[17px] h-[60px] w-14" fill="none" stroke="#666" strokeWidth="3">
                    <rect x="3" y="6" width="22" height="22" rx="3" />
                    <rect x="3" y="34" width="22" height="22" rx="3" />
                    <rect x="31" y="34" width="22" height="22" rx="3" />
                    <path d="M42 5l11 12-11 12-11-12z" strokeLinejoin="round" />
                </svg>
                <Fit w={ 114 } className={ label }>功能</Fit>
            </div>
            <div className="flex w-[222px] shrink-0 flex-col items-center pt-[9px] pl-5">
                <svg viewBox="0 0 60 60" className="mb-[17px] size-[60px]" fill="none">
                    <circle cx="30" cy="30" r="27" stroke="#666" strokeWidth="2.800" />
                    <circle cx="18" cy="30" r="3" fill="#666" />
                    <circle cx="30" cy="30" r="3" fill="#666" />
                    <circle cx="42" cy="30" r="3" fill="#666" />
                </svg>
                <Fit w={ 172 } className={ label }>设自选</Fit>
            </div>
        </footer>
    );
}

export default function App() {
    return (
        <div className="flex h-[2400px] w-[1080px] flex-col overflow-hidden bg-white font-['Lato','Noto_Sans_CJK_SC',sans-serif] leading-none">
            <StatusBar />
            <Header />
            <Summary />
            <Notice />
            <Tabs />
            <PriceRow />
            <main className="flex h-[1310px]">
                <LeftPanel />
                <RightPanel />
            </main>
            <Queue />
            <BottomBar />
        </div>
    );
}
